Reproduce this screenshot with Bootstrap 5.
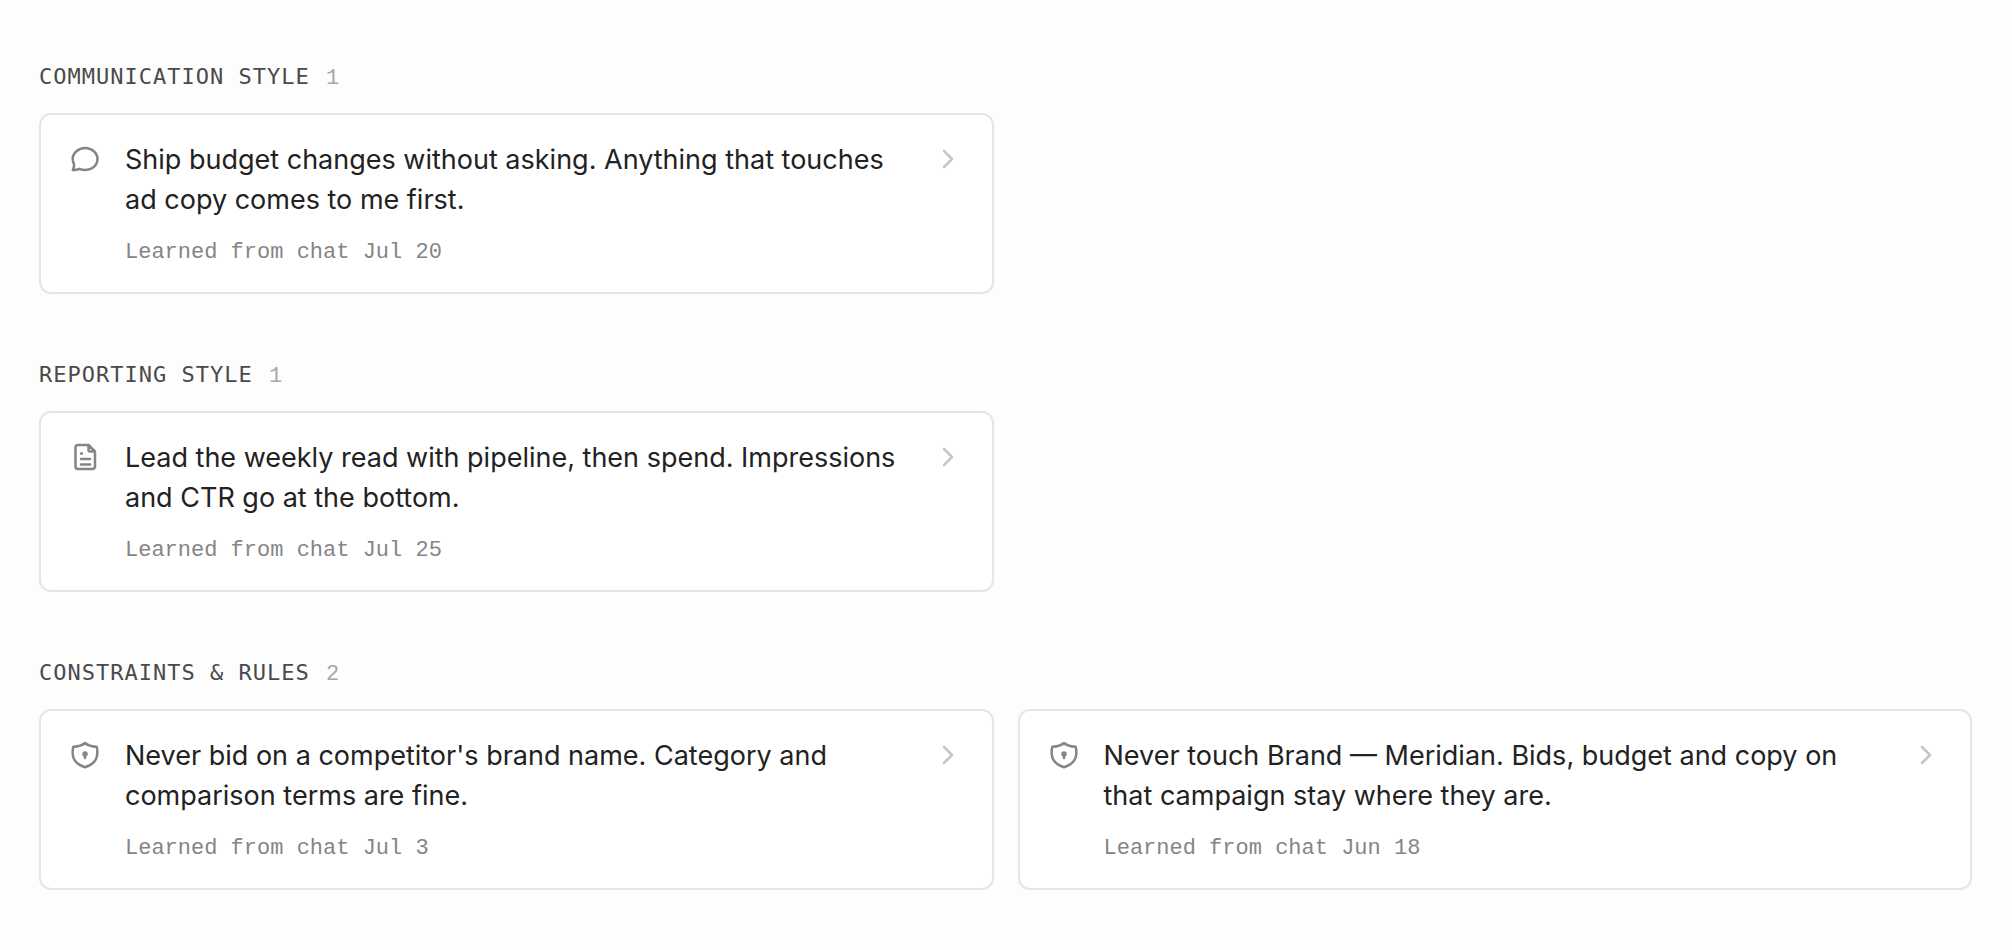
<!DOCTYPE html>
<html lang="en">
<head>
<meta charset="utf-8">
<meta name="viewport" content="width=device-width, initial-scale=1">
<title>Memory</title>
<link href="https://cdn.jsdelivr.net/npm/bootstrap@5.3.0/dist/css/bootstrap.min.css" rel="stylesheet">
<style>
  body { background: #fdfdfd; color: #222; font-family: Inter, "Liberation Sans", Arial, sans-serif; }
  .memory-page { padding: 60px 40px 60px 39px; gap: 64px; }
  .group-title, .memory-meta { font-family: "Liberation Mono", "Courier New", monospace; font-size: 22px; line-height: 33px; }
  .group-title { margin-bottom: 20px; color: #4a4a4a; font-family: "DejaVu Sans Mono", monospace; letter-spacing: 1px; }
  .group-count { margin-left: 2px; color: #a6a6a6; font-family: "Liberation Mono", monospace; line-height: 1; }
  .memory-grid { --bs-gutter-x: 24px; --bs-gutter-y: 24px; }
  .memory-card { border: 2px solid #e5e5e5; border-radius: 12px; padding: 24px 28px 23px; gap: 24px; background: #fff; color: #222; }
  .memory-card:hover { border-color: #ccc; }
  .memory-body { padding-top: 1px; }
  .memory-text { font-size: 27px; line-height: 40px; }
  .memory-meta { margin-top: 16px; color: #858585; }
  .memory-icon { width: 32px; height: 32px; color: #858585; fill: none; stroke: currentColor; stroke-width: 2.5; stroke-linecap: round; stroke-linejoin: round; }
  .memory-chevron { color: #c6c6c6; }
</style>
</head>
<body>
<svg class="d-none" aria-hidden="true">
  <symbol id="icon-chat" viewBox="0 0 32 32">
    <path d="M16.2 5C22.9 5 28.5 9.9 28.5 16C28.5 22.2 22.9 27 16.2 27C14.2 27 12.3 26.600 10.600 25.800C8.300 26.800 6 27.200 3.800 27C4.600 25.500 5.200 23.600 5.100 21.300C4.200 19.700 3.700 17.900 3.700 16C3.700 9.900 9.500 5 16.200 5Z"/>
  </symbol>
  <symbol id="icon-file" viewBox="0 0 32 32">
    <path d="M9 4H19.500L26 10.500V25.500A2.500 2.500 0 0 1 23.500 28H9A2.500 2.500 0 0 1 6.500 25.500V6.500A2.500 2.500 0 0 1 9 4ZM19.500 4V9A1.500 1.500 0 0 0 21 10.500H26M12 12.500H13M12 18H21M12 23.500H21"/>
  </symbol>
  <symbol id="icon-shield" viewBox="0 0 32 32">
    <path d="M16 4C18.800 6.500 22.600 7.500 27.600 7.700C28.300 10 28.500 12.800 28.200 15.800C27.400 21.500 22.500 26.200 16 28.200C9.500 26.200 4.600 21.500 3.800 15.800C3.500 12.800 3.700 10 4.400 7.700C9.400 7.500 13.200 6.500 16 4Z"/>
    <path d="M16 15V19"/>
    <circle cx="16" cy="15" r="1.500" fill="currentColor"/>
  </symbol>
  <symbol id="icon-chevron" viewBox="0 0 32 32">
    <path d="M12 8L20 16L12 24"/>
  </symbol>
</svg>

<main class="memory-page container-fluid d-flex flex-column">
  <section aria-labelledby="communication">
    <h2 class="group-title fw-normal" id="communication">COMMUNICATION STYLE <span class="group-count">1</span></h2>
    <div class="row row-cols-1 row-cols-lg-2 memory-grid">
      <div class="col">
        <a href="#" class="memory-card d-flex align-items-start text-decoration-none">
          <svg class="memory-icon flex-shrink-0 mt-1" aria-hidden="true"><use href="#icon-chat"/></svg>
          <div class="memory-body flex-grow-1 me-2">
            <p class="memory-text mb-0">Ship budget changes without asking. Anything that touches ad copy comes to me first.</p>
            <p class="memory-meta mb-0">Learned from chat Jul 20</p>
          </div>
          <svg class="memory-icon memory-chevron flex-shrink-0 mt-1" aria-hidden="true"><use href="#icon-chevron"/></svg>
        </a>
      </div>
    </div>
  </section>

  <section aria-labelledby="reporting">
    <h2 class="group-title fw-normal" id="reporting">REPORTING STYLE <span class="group-count">1</span></h2>
    <div class="row row-cols-1 row-cols-lg-2 memory-grid">
      <div class="col">
        <a href="#" class="memory-card d-flex align-items-start text-decoration-none">
          <svg class="memory-icon flex-shrink-0 mt-1" aria-hidden="true"><use href="#icon-file"/></svg>
          <div class="memory-body flex-grow-1 me-2">
            <p class="memory-text mb-0">Lead the weekly read with pipeline, then spend. Impressions and CTR go at the bottom.</p>
            <p class="memory-meta mb-0">Learned from chat Jul 25</p>
          </div>
          <svg class="memory-icon memory-chevron flex-shrink-0 mt-1" aria-hidden="true"><use href="#icon-chevron"/></svg>
        </a>
      </div>
    </div>
  </section>

  <section aria-labelledby="constraints">
    <h2 class="group-title fw-normal" id="constraints">CONSTRAINTS &amp; RULES <span class="group-count">2</span></h2>
    <div class="row row-cols-1 row-cols-lg-2 memory-grid">
      <div class="col">
        <a href="#" class="memory-card d-flex align-items-start text-decoration-none">
          <svg class="memory-icon flex-shrink-0 mt-1" aria-hidden="true"><use href="#icon-shield"/></svg>
          <div class="memory-body flex-grow-1 me-2">
            <p class="memory-text mb-0">Never bid on a competitor's brand name. Category and comparison terms are fine.</p>
            <p class="memory-meta mb-0">Learned from chat Jul 3</p>
          </div>
          <svg class="memory-icon memory-chevron flex-shrink-0 mt-1" aria-hidden="true"><use href="#icon-chevron"/></svg>
        </a>
      </div>
      <div class="col">
        <a href="#" class="memory-card d-flex align-items-start text-decoration-none">
          <svg class="memory-icon flex-shrink-0 mt-1" aria-hidden="true"><use href="#icon-shield"/></svg>
          <div class="memory-body flex-grow-1 me-2">
            <p class="memory-text mb-0">Never touch Brand — Meridian. Bids, budget and copy on that campaign stay where they are.</p>
            <p class="memory-meta mb-0">Learned from chat Jun 18</p>
          </div>
          <svg class="memory-icon memory-chevron flex-shrink-0 mt-1" aria-hidden="true"><use href="#icon-chevron"/></svg>
        </a>
      </div>
    </div>
  </section>
</main>
<script src="https://cdn.jsdelivr.net/npm/bootstrap@5.3.0/dist/js/bootstrap.bundle.min.js"></script>
</body>
</html>
